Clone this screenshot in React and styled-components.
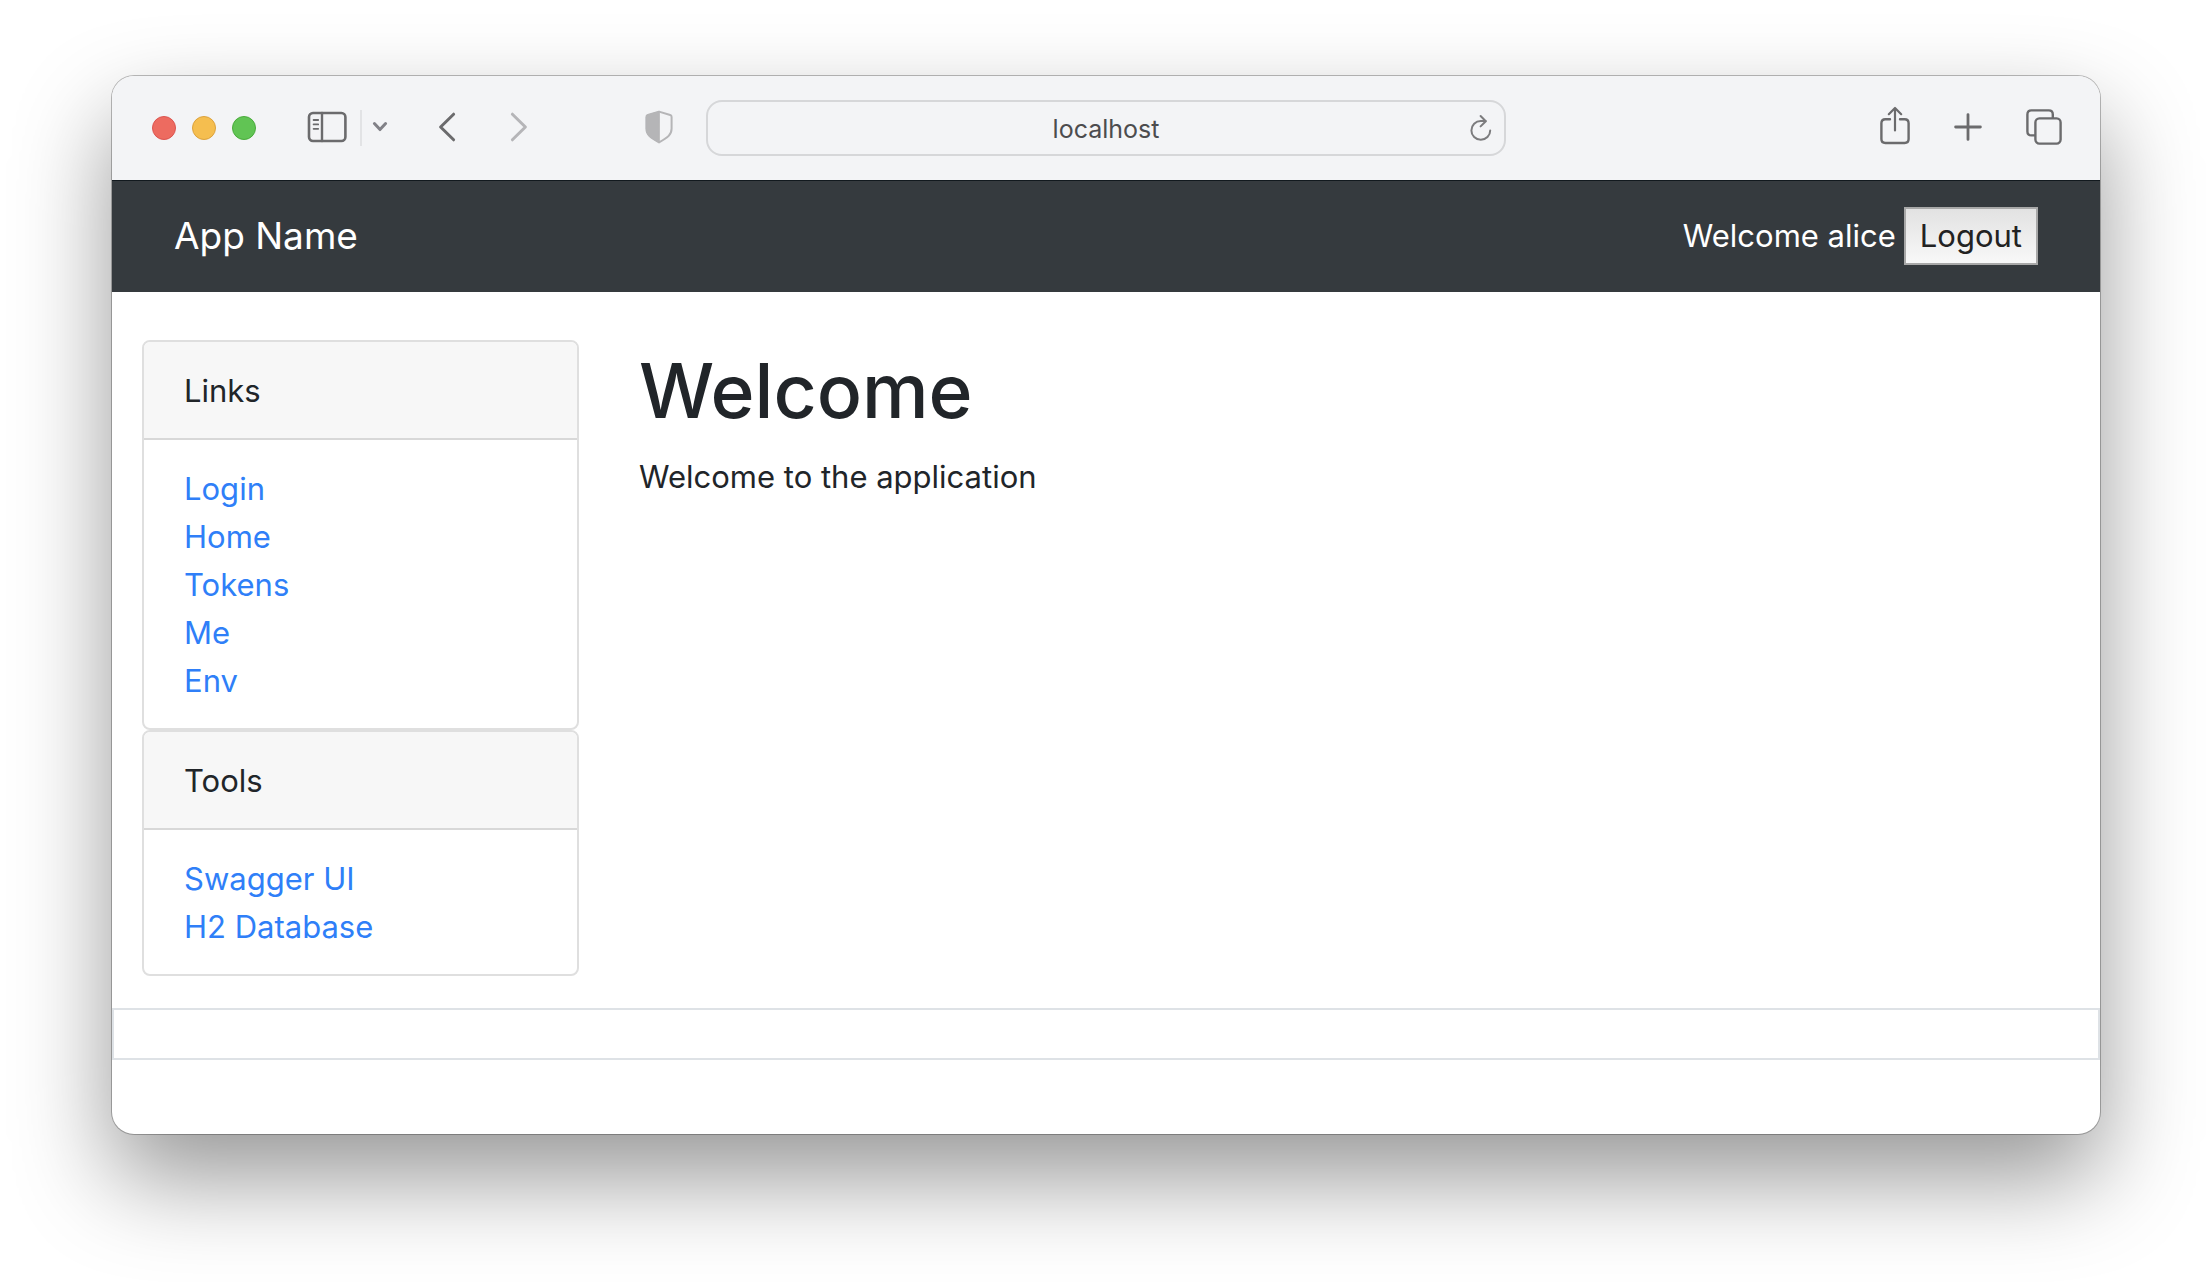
import React from "react";
import styled, { createGlobalStyle } from "styled-components";

const GlobalStyle = createGlobalStyle`
  *, *::before, *::after { box-sizing: border-box; }
  body {
    margin: 0;
    background: #fff;
    color: #212529;
    font-family: Inter, "Liberation Sans", sans-serif;
    font-size: 31px;
    line-height: 48px;
  }
`;

const Desktop = styled.div`
  padding: 76px 112px 148px;
`;

const Window = styled.div`
  border-radius: 22px;
  background: #fff;
  box-shadow: 0 0 0 1px rgba(0, 0, 0, 0.26), 0 44px 96px rgba(0, 0, 0, 0.41);
  overflow: hidden;
`;

const Toolbar = styled.div`
  display: grid;
  grid-template-columns: 1fr minmax(0, 800px) 1fr;
  align-items: center;
  height: 104px;
  background: #f3f4f6;
`;

const ToolGroup = styled.div`
  display: flex;
  align-items: center;
  justify-content: ${(p) => (p.$end ? "flex-end" : "flex-start")};
  padding: ${(p) => (p.$end ? "0 38px 0 0" : "0 32px 0 40px")};
  gap: ${(p) => p.$gap}px;
`;

const Lights = styled.div`
  display: flex;
  gap: 16px;
  margin-right: 51px;
`;

const Light = styled.button`
  width: 24px;
  height: 24px;
  padding: 0;
  border: 1px solid ${(p) => p.$edge};
  border-radius: 50%;
  background: ${(p) => p.$fill};
`;

const IconButton = styled.button`
  display: flex;
  flex: none;
  padding: 0 0 2px;
  border: 0;
  background: none;
  color: ${(p) => p.$color || "#6b6b6d"};
  margin-left: ${(p) => p.$before || 0}px;

  svg {
    display: block;
    fill: none;
    stroke: currentColor;
    stroke-linecap: round;
    stroke-linejoin: round;
  }
`;

const Divider = styled.span`
  width: 2px;
  height: 36px;
  margin: 0 10px 0 13px;
  background: #e2e3e5;
`;

const AddressBar = styled.div`
  display: flex;
  align-items: center;
  height: 56px;
  padding: 2px 12px 0 34px;
  border: 2px solid #d6d7d9;
  border-radius: 16px;
`;

const AddressInput = styled.input`
  flex: 1;
  min-width: 0;
  padding: 0;
  border: 0;
  background: none;
  color: #4c4c4e;
  font: inherit;
  font-size: 25px;
  text-align: center;
  outline: none;
`;

const Navbar = styled.nav`
  display: flex;
  align-items: center;
  justify-content: space-between;
  height: 112px;
  padding: 0 62px;
  background: #353a3e;
  box-shadow: inset 0 1px #12191e;
  color: #fff;
`;

const Brand = styled.a`
  color: #fff;
  font-size: 37px;
  text-decoration: none;
`;

const Session = styled.form`
  display: flex;
  align-items: center;
  gap: 8px;
`;

const LogoutButton = styled.button`
  height: 58px;
  padding: 0 14px;
  border: 2px solid #a8a8a8;
  border-radius: 0;
  background: linear-gradient(#e2e2e2, #f8f8f8);
  color: #222;
  font: inherit;
`;

const Columns = styled.div`
  display: grid;
  grid-template-columns: 25% 1fr;
  padding-top: 48px;
`;

const Column = styled.div`
  padding: 0 30px;
`;

const Card = styled.section`
  border: 2px solid #dfdfdf;
  border-radius: 8px;
  overflow: hidden;
`;

const CardHeader = styled.div`
  padding: 25px 40px 23px;
  border-bottom: 2px solid #d8d8d8;
  background: #f7f7f7;
`;

const LinkList = styled.ul`
  margin: 0;
  padding: 25px 40px 23px;
  list-style: none;
`;

const CardLink = styled.a`
  color: #2f7ff8;
  text-decoration: none;
`;

const Title = styled.h1`
  margin: 0 0 11px;
  font-size: 75px;
  font-weight: 500;
  line-height: 102px;
`;

const Text = styled.p`
  margin: 0;
`;

const Footer = styled.footer`
  height: 52px;
  margin: 32px 0 74px;
  border: 2px solid #dee2e6;
`;

function LinkCard({ title, links }) {
  return (
    <Card>
      <CardHeader>{title}</CardHeader>
      <LinkList>
        {links.map((name) => (
          <li key={name}>
            <CardLink href="#">{name}</CardLink>
          </li>
        ))}
      </LinkList>
    </Card>
  );
}

function BrowserToolbar() {
  return (
    <Toolbar>
      <ToolGroup $gap={0}>
        <Lights>
          <Light aria-label="Close" $fill="#ed6b60" $edge="#dc5550" />
          <Light aria-label="Minimize" $fill="#f5be4f" $edge="#dca23d" />
          <Light aria-label="Zoom" $fill="#61c454" $edge="#4aab3c" />
        </Lights>
        <IconButton aria-label="Sidebar">
          <svg width="40" height="32" viewBox="0 0 40 32">
            <rect x="2" y="2" width="36.4" height="28" rx="4" strokeWidth="2.6" />
            <path d="M15 2v28" strokeWidth="2.4" />
            <path d="M6.6 9h4.6M6.6 13.4h4.6M6.6 17.8h4.6" strokeWidth="1.8" />
          </svg>
        </IconButton>
        <Divider />
        <IconButton aria-label="Sidebar options" $color="#818187">
          <svg width="16" height="12" viewBox="0 0 16 12">
            <path d="M2.4 2.6L8 8.6L13.6 2.6" strokeWidth="3" />
          </svg>
        </IconButton>
        <IconButton aria-label="Back" $before={50}>
          <svg width="18" height="32" viewBox="0 0 18 32">
            <path d="M15.6 3.2L2.6 16L15.6 28.8" strokeWidth="3" />
          </svg>
        </IconButton>
        <IconButton aria-label="Forward" $before={54} $color="#b5b5b8">
          <svg width="18" height="32" viewBox="0 0 18 32">
            <path d="M2.4 3.2L15.4 16L2.4 28.8" strokeWidth="3" />
          </svg>
        </IconButton>
        <IconButton aria-label="Privacy report" $before={117} $color="#b5b5b7">
          <svg width="28" height="34" viewBox="0 0 28 34">
            <path
              d="M14 1.6L25.2 5Q26.6 5.4 26.6 7V18.5C26.6 24.5 23 27.5 14 32.4C5 27.5 1.4 24.5 1.4 18.5V7Q1.4 5.4 2.8 5Z"
              strokeWidth="2"
            />
            <path
              d="M14 1.6L2.8 5Q1.4 5.4 1.4 7V18.5C1.4 24.5 5 27.5 14 32.4Z"
              fill="currentColor"
              strokeWidth="1"
            />
          </svg>
        </IconButton>
      </ToolGroup>
      <AddressBar>
        <AddressInput aria-label="Address" defaultValue="localhost" />
        <IconButton aria-label="Reload" $color="#7c7c7e">
          <svg width="22" height="28" viewBox="0 0 22 28">
            <path d="M20.2 16.4A9.4 9.4 0 1 1 10.8 7H15.6" strokeWidth="2" />
            <path d="M10.6 2L15.8 7.2L10.6 12.4" strokeWidth="2" />
          </svg>
        </IconButton>
      </AddressBar>
      <ToolGroup $end $gap={44}>
        <IconButton aria-label="Share">
          <svg width="30" height="42" viewBox="0 2 30 42">
            <path
              d="M10 15.2H5.4Q1.4 15.2 1.4 19.2V35Q1.4 39 5.4 39H24.6Q28.6 39 28.6 35V19.2Q28.6 15.2 24.6 15.2H20"
              strokeWidth="2.4"
            />
            <path d="M15 26.5V4.4M8.8 10.2L15 4L21.2 10.2" strokeWidth="2.2" />
          </svg>
        </IconButton>
        <IconButton aria-label="New tab">
          <svg width="28" height="28" viewBox="0 0 28 28">
            <path d="M14 1.6V26.4M1.6 14H26.4" strokeWidth="2.8" />
          </svg>
        </IconButton>
        <IconButton aria-label="Tab overview">
          <svg width="36" height="36" viewBox="0 0 36 36">
            <path
              d="M8.6 26.4H5.4Q1.4 26.4 1.4 22.4V5.4Q1.4 1.4 5.4 1.4H22.8Q26.8 1.4 26.8 5.4V8.8"
              strokeWidth="2.4"
            />
            <rect x="9.4" y="9.4" width="25.2" height="25.2" rx="4" strokeWidth="2.4" />
          </svg>
        </IconButton>
      </ToolGroup>
    </Toolbar>
  );
}

export default function App() {
  return (
    <>
      <GlobalStyle />
      <Desktop>
        <Window>
          <BrowserToolbar />
          <Navbar>
            <Brand href="#">App Name</Brand>
            <Session onSubmit={(e) => e.preventDefault()}>
              <span>Welcome alice</span>
              <LogoutButton type="submit">Logout</LogoutButton>
            </Session>
          </Navbar>
          <Columns>
            <Column as="aside">
              <LinkCard title="Links" links={["Login", "Home", "Tokens", "Me", "Env"]} />
              <LinkCard title="Tools" links={["Swagger UI", "H2 Database"]} />
            </Column>
            <Column as="main">
              <Title>Welcome</Title>
              <Text>Welcome to the application</Text>
            </Column>
          </Columns>
          <Footer />
        </Window>
      </Desktop>
    </>
  );
}
